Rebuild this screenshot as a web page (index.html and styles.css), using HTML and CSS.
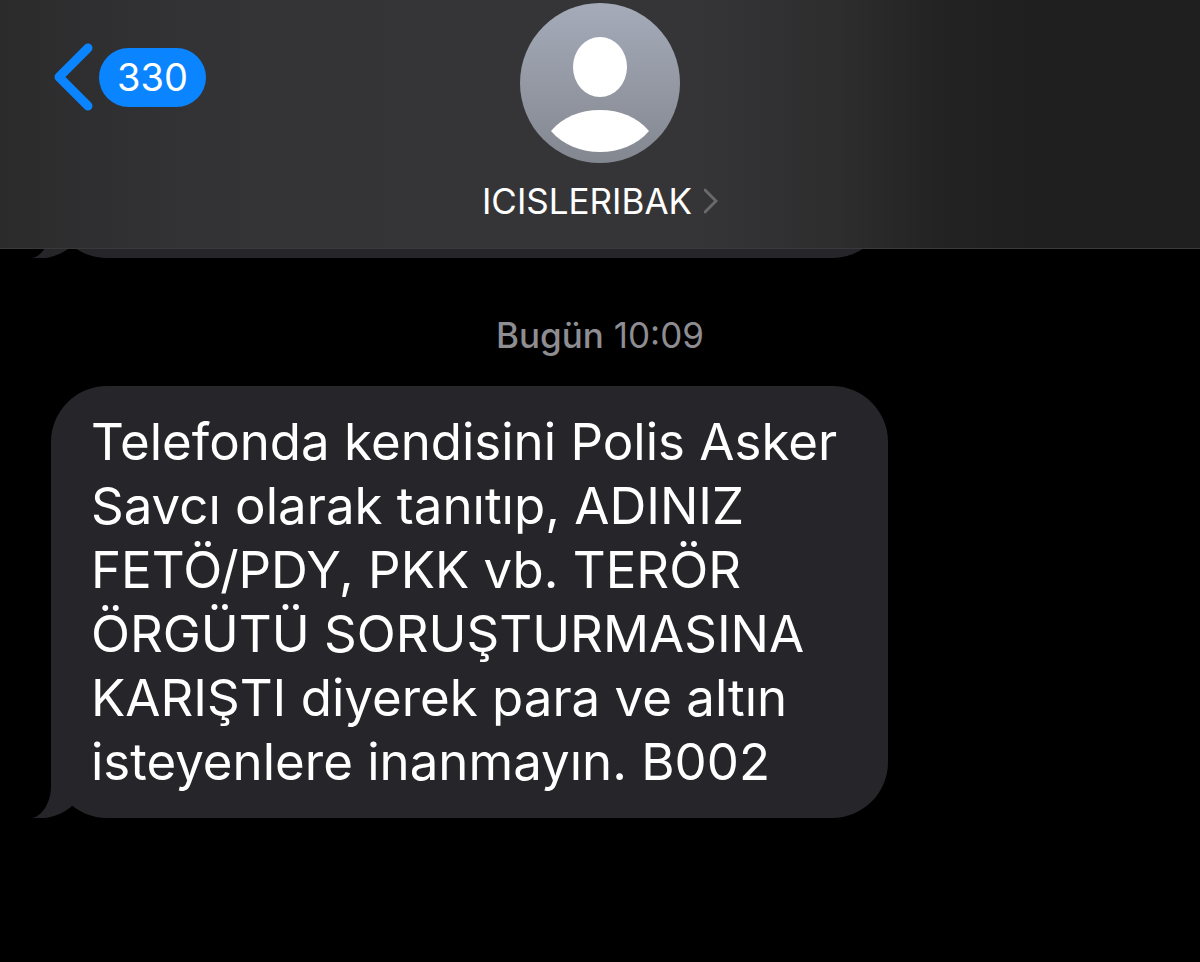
FILE: index.html
```html
<!DOCTYPE html>
<html lang="tr">
    <head>
        <meta charset="UTF-8">
        <meta name="viewport" content="width=device-width, initial-scale=1.0">
        <title>ICISLERIBAK</title>
        <link rel="stylesheet" href="styles.css">
    </head>
    <body>
        <header class="chat-header">
            <button type="button" class="back-btn">
                <svg class="back-icon" viewBox="0 0 40 68" aria-hidden="true">
                    <path d="M35 5 L6 34 L35 63" />
                </svg>
                <span class="badge">330</span>
            </button>
            <button type="button" class="contact">
                <svg class="avatar" viewBox="0 0 160 160" aria-hidden="true">
                    <defs>
                        <linearGradient id="avatar-fill" x1="0" y1="0" x2="0" y2="1">
                            <stop offset="0" stop-color="#a5abb9" />
                            <stop offset="1" stop-color="#838790" />
                        </linearGradient>
                    </defs>
                    <circle cx="80" cy="80" r="80" fill="url(#avatar-fill)" />
                    <ellipse cx="80" cy="64" rx="27" ry="30" fill="#fff" />
                    <path d="M31 128 C43 114 60 107 80 107 C100 107 117 114 129 128 C117 142 99 149 80 149 C61 149 43 142 31 128 Z" fill="#fff" />
                </svg>
                <span class="contact-name">
                    ICISLERIBAK
                    <svg class="chevron" viewBox="0 0 14 26" aria-hidden="true">
                        <path d="M1 2 L12 13 L1 24" />
                    </svg>
                </span>
            </button>
        </header>

        <main class="messages">
            <!-- end of the previous message, scrolled under the header -->
            <div class="previous">
                <div class="message">
                    <svg class="tail" viewBox="0 0 40 58" aria-hidden="true">
                        <path d="M18 0 V26 C18 42 10 55 0 58 C16 60 30 54 40 45 V0 Z" />
                    </svg>
                </div>
            </div>

            <time class="timestamp" datetime="10:09"><b>Bugün</b> 10:09</time>

            <div class="message">
                Telefonda kendisini Polis Asker Savcı olarak tanıtıp, ADINIZ FETÖ/PDY, PKK vb. TERÖR ÖRGÜTÜ SORUŞTURMASINA KARIŞTI diyerek para ve altın isteyenlere inanmayın. B002
                <svg class="tail" viewBox="0 0 40 58" aria-hidden="true">
                    <path d="M18 0 V26 C18 42 10 55 0 58 C16 60 30 54 40 45 V0 Z" />
                </svg>
            </div>
        </main>
    </body>
</html>
```

FILE: styles.css
```css
* {
    box-sizing: border-box;
}

body, html {
    min-height: 100%;
    margin: 0;
    background-color: #000;
    color: #fff;
    font-family: Inter, "Liberation Sans", sans-serif;
}
button {
    padding: 0;
    border: none;
    background: none;
    color: inherit;
    font: inherit;
    cursor: pointer;
}
.chat-header {
    display: grid;
    grid-template-columns: 1fr auto 1fr;
    align-items: start;
    padding: 3px 53px 25px;
    border-bottom: 1px solid #39393b;
    background: linear-gradient(to right, #2b2b2c 0%, #333335 16%, #353537 35%, #353537 58%, #2d2d2e 70%, #232323 78%, #1f1f1f 86%, #1f1f1f 100%);
}
.back-btn {
    display: flex;
    align-items: center;
    justify-self: start;
    gap: 6px;
    margin-top: 40px;
}
.back-icon {
    width: 40px;
    height: 68px;
}
.back-icon path {
    fill: none;
    stroke: #0a84ff;
    stroke-width: 9;
    stroke-linecap: round;
    stroke-linejoin: round;
}
.badge {
    padding: 0 18px;
    border-radius: 30px;
    background-color: #0a84ff;
    font-size: 38px;
    line-height: 59px;
}
.contact {
    display: flex;
    flex-direction: column;
    align-items: center;
    gap: 16px;
}
.avatar {
    width: 160px;
    height: 160px;
}
.contact-name {
    display: flex;
    align-items: center;
    gap: 12px;
    font-size: 35px;
    line-height: 44px;
}
.chevron {
    width: 14px;
    height: 26px;
}
.chevron path {
    fill: none;
    stroke: #69696c;
    stroke-width: 3;
    stroke-linecap: round;
}
.messages {
    display: flex;
    flex-direction: column;
    padding: 0 51px 144px;
}
.previous {
    display: flex;
    align-items: flex-end;
    height: 9px;
    margin-left: -51px;
    padding-left: 51px;
    overflow: hidden;
}
.previous .message {
    flex: none;
    width: 837px;
    height: 112px;
}
.timestamp {
    margin: 57px 0 31px;
    color: #8d8d92;
    font-size: 35px;
    line-height: 40px;
    text-align: center;
}
.timestamp b {
    font-weight: 500;
}
.message {
    position: relative;
    max-width: 837px;
    padding: 24px 40px;
    border-radius: 56px;
    background-color: #26262a;
    font-size: 51px;
    line-height: 64px;
}
.tail {
    position: absolute;
    left: -18px;
    bottom: 0;
    width: 40px;
    height: 58px;
    fill: #26262a;
}
```
